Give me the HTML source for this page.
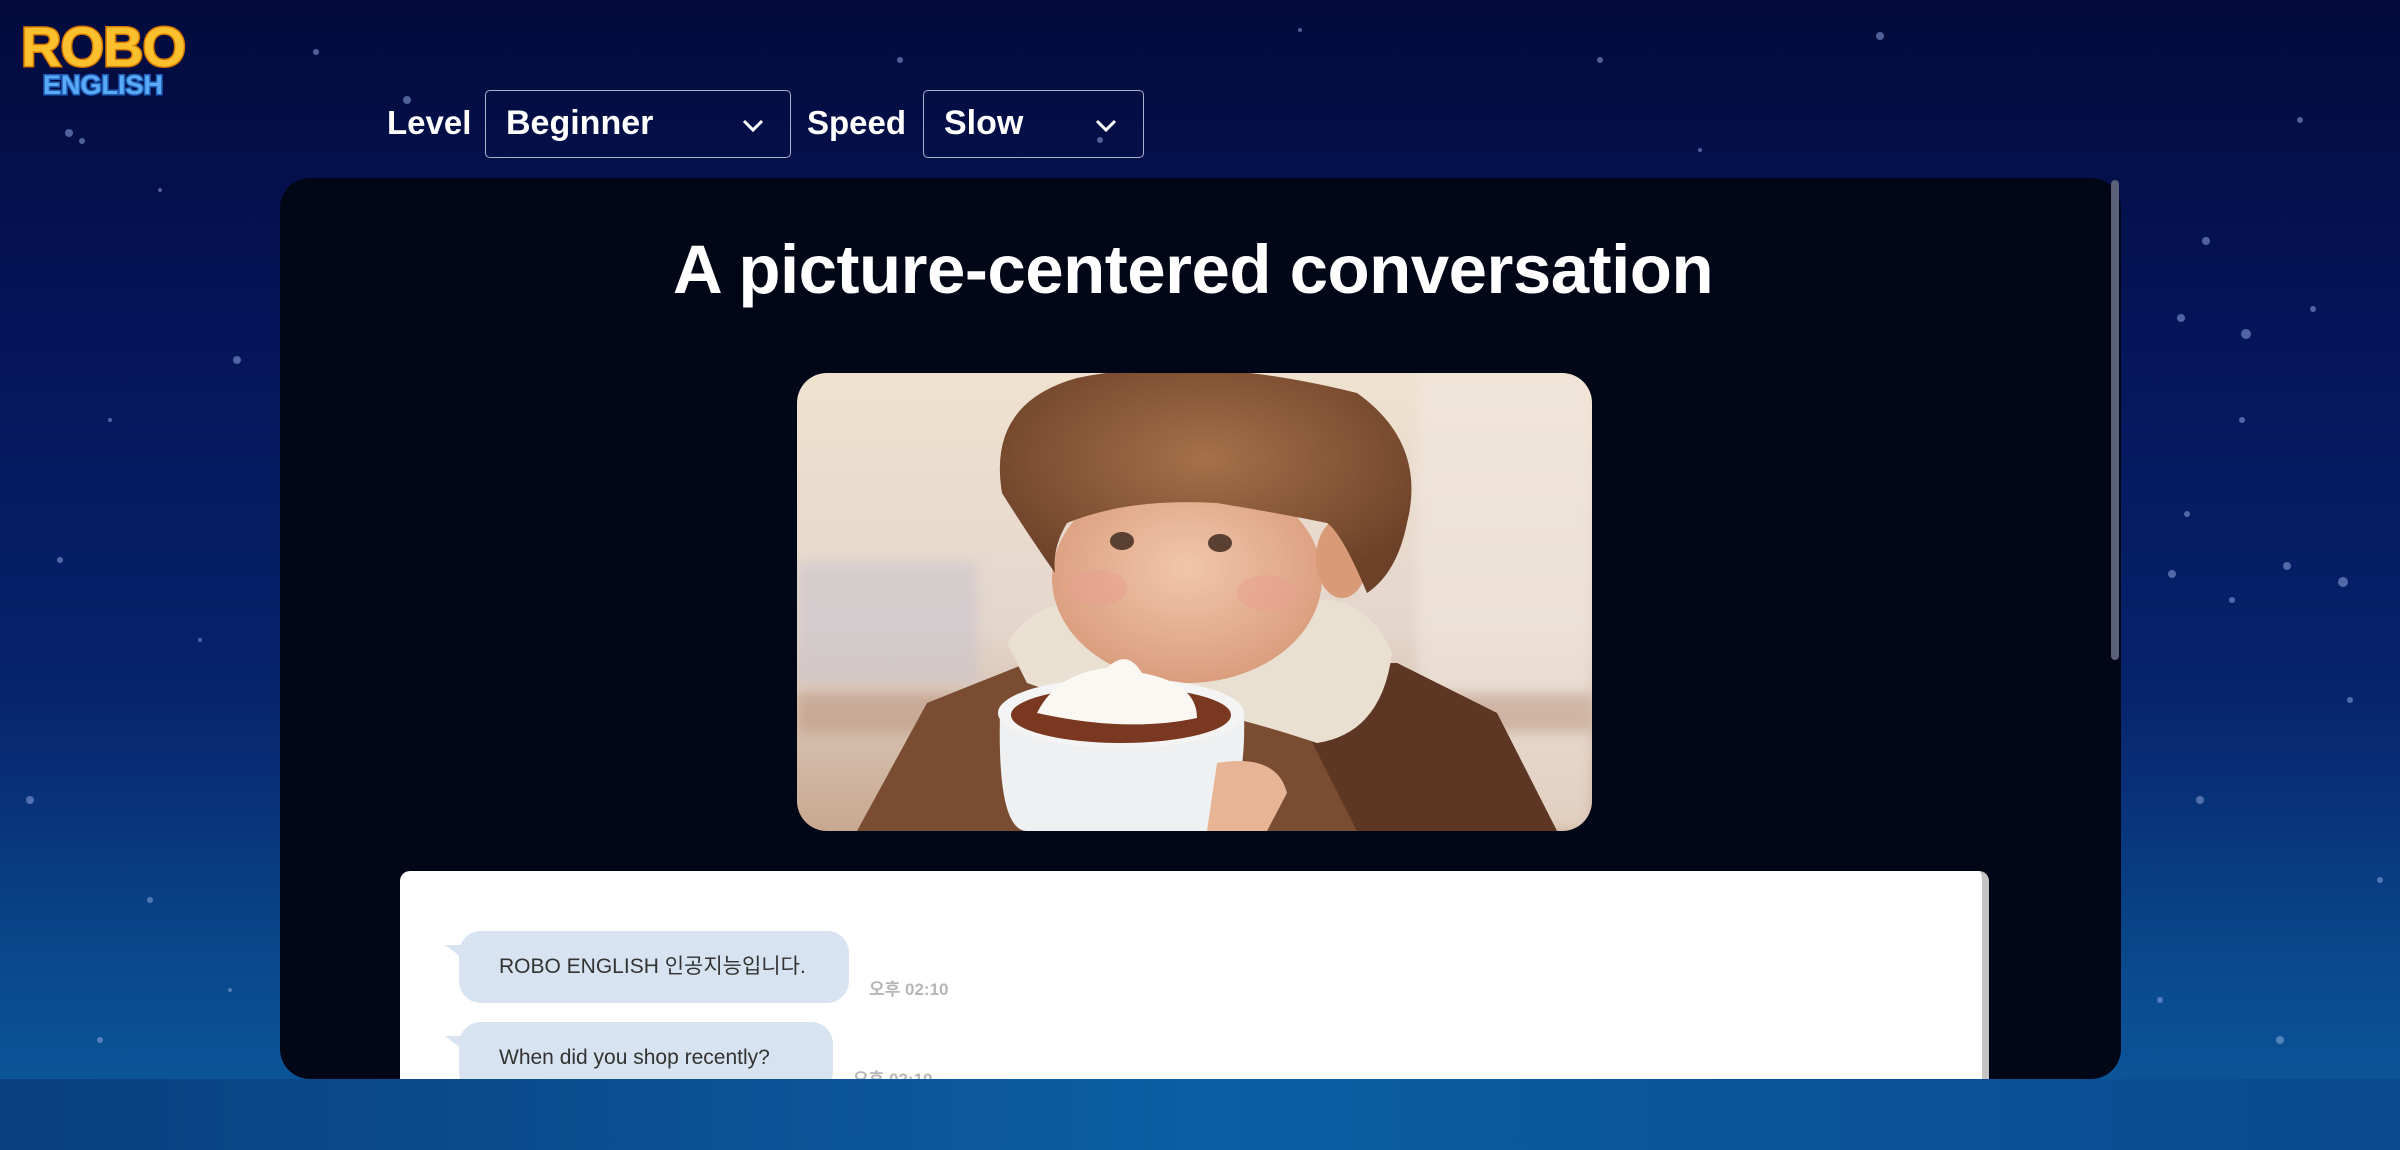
<!DOCTYPE html>
<html><head><meta charset="utf-8"><style>
*{margin:0;padding:0;box-sizing:border-box}
html,body{width:2400px;height:1150px;overflow:hidden}
body{position:relative;font-family:"Liberation Sans","Noto Sans CJK KR",sans-serif;
background:linear-gradient(180deg,#030b3c 0%,#05155a 30%,#07236d 60%,#0a4a8e 85%,#0b5c9e 100%);}
.stars{position:absolute;left:0;top:0}
.logo{position:absolute;left:18px;top:14px;width:170px;height:86px}
.lbl{position:absolute;color:#fff;font-weight:bold;font-size:33px;top:104px}
.sel{position:absolute;top:90px;height:68px;border:1.5px solid #aab3cc;border-radius:5px;color:#fff;font-weight:bold;font-size:34px;padding:13px 0 0 20px}
.sel svg{position:absolute;right:26px;top:28px}
.panel{position:absolute;left:280px;top:178px;width:1841px;height:901px;background:#020718;border-radius:30px;overflow:hidden}
.sb{position:absolute;left:2111px;top:180px;width:8px;height:480px;background:#5a6078;border-radius:4px}
h1{position:absolute;left:0;width:2386px;top:230px;text-align:center;color:#fff;font-size:69px;font-weight:bold;letter-spacing:-0.5px}
.pic{position:absolute;left:797px;top:373px;width:795px;height:458px;border-radius:30px;overflow:hidden}
.chat{position:absolute;left:400px;top:871px;width:1589px;height:220px;background:#fff;border-radius:10px 10px 0 0;border-right:7px solid #c4c4c4}
.bub{position:absolute;background:#d7e3f0;border-radius:22px;color:#333;font-size:21px;padding:0 40px;line-height:72px}
.bub:before{content:"";position:absolute;left:-14px;top:14px;border-top:12px solid #d7e3f0;border-left:16px solid transparent}
.tm{position:absolute;color:#b6b6b6;font-size:17px;font-weight:bold}
.bottom{position:absolute;left:0;top:1079px;width:2400px;height:71px;background:linear-gradient(90deg,#0a3f80,#0b5ea2 50%,#0a4a8e)}
</style></head><body>
<svg class="stars" width="2400" height="1150">
<g fill="#8fa6e0" opacity=".55">
<circle cx="316" cy="52" r="3"/><circle cx="407" cy="100" r="4"/><circle cx="160" cy="190" r="2"/><circle cx="69" cy="133" r="4"/><circle cx="82" cy="141" r="3"/><circle cx="237" cy="360" r="4"/><circle cx="110" cy="420" r="2"/><circle cx="60" cy="560" r="3"/><circle cx="200" cy="640" r="2"/><circle cx="30" cy="800" r="4"/><circle cx="150" cy="900" r="3"/><circle cx="230" cy="990" r="2"/><circle cx="100" cy="1040" r="3"/>
<circle cx="2206" cy="241" r="4"/><circle cx="2181" cy="318" r="4"/><circle cx="2246" cy="334" r="5"/><circle cx="2313" cy="309" r="3"/><circle cx="2187" cy="514" r="3"/><circle cx="2242" cy="420" r="3"/><circle cx="2172" cy="574" r="4"/><circle cx="2287" cy="566" r="4"/><circle cx="2343" cy="582" r="5"/><circle cx="2232" cy="600" r="3"/><circle cx="2300" cy="120" r="3"/><circle cx="2350" cy="700" r="3"/><circle cx="2200" cy="800" r="4"/><circle cx="2380" cy="880" r="3"/><circle cx="2160" cy="1000" r="3"/><circle cx="2280" cy="1040" r="4"/><circle cx="1880" cy="36" r="4"/><circle cx="1600" cy="60" r="3"/><circle cx="1300" cy="30" r="2"/><circle cx="900" cy="60" r="3"/><circle cx="1100" cy="140" r="3"/><circle cx="1700" cy="150" r="2"/>
<circle cx="560" cy="1110" r="3"/><circle cx="900" cy="1120" r="3"/><circle cx="1420" cy="1110" r="4"/><circle cx="1900" cy="1120" r="3"/><circle cx="1200" cy="1135" r="2"/>
</g></svg>
<svg class="logo" viewBox="0 0 170 86">
<text x="85" y="52" text-anchor="middle" font-family="Liberation Sans" font-weight="bold" font-size="56" fill="#fbc02d" stroke="#d97a00" stroke-width="3" paint-order="stroke" letter-spacing="-1">ROBO</text>
<text x="85" y="80" text-anchor="middle" font-family="Liberation Sans" font-weight="bold" font-size="27" fill="#5aaaf5" stroke="#1f5fb8" stroke-width="3" paint-order="stroke">ENGLISH</text>
</svg>
<div class="lbl" style="left:387px">Level</div>
<div class="sel" style="left:485px;width:306px">Beginner<svg width="22" height="14" viewBox="0 0 22 14"><path d="M2 2 L11 11 L20 2" stroke="#fff" stroke-width="3" fill="none"/></svg></div>
<div class="lbl" style="left:807px">Speed</div>
<div class="sel" style="left:923px;width:221px">Slow<svg width="22" height="14" viewBox="0 0 22 14"><path d="M2 2 L11 11 L20 2" stroke="#fff" stroke-width="3" fill="none"/></svg></div>
<div class="panel"></div>
<div class="sb"></div>
<h1>A picture-centered conversation</h1>
<div class="pic"><svg width="795" height="458" viewBox="0 0 795 458">
<defs>
<linearGradient id="bg" x1="0" y1="0" x2="0" y2="1"><stop offset="0" stop-color="#efe2cf"/><stop offset=".55" stop-color="#e4d6cc"/><stop offset=".75" stop-color="#d8c3b2"/><stop offset="1" stop-color="#c8a890"/></linearGradient>
<radialGradient id="face" cx=".5" cy=".45" r=".6"><stop offset="0" stop-color="#f2c6aa"/><stop offset="1" stop-color="#d89a7a"/></radialGradient>
<radialGradient id="hair" cx=".5" cy=".4" r=".6"><stop offset="0" stop-color="#a6714a"/><stop offset="1" stop-color="#6d4128"/></radialGradient>
<filter id="bl"><feGaussianBlur stdDeviation="6"/></filter>
</defs>
<rect width="795" height="458" fill="url(#bg)"/>
<g filter="url(#bl)">
<rect x="0" y="190" width="180" height="120" fill="#c9c4cf" opacity=".6"/>
<rect x="620" y="0" width="175" height="458" fill="#f1e8e0" opacity=".6"/>
<rect x="0" y="320" width="795" height="40" fill="#b8907a" opacity=".5"/>
</g>
<path d="M60 458 L130 330 L230 290 L600 290 L700 340 L760 458 Z" fill="#7a4d33"/>
<path d="M480 300 L600 290 L700 340 L760 458 L560 458 Z" fill="#5e3624"/>
<path d="M210 270 Q250 210 320 240 L470 240 Q560 200 595 280 Q585 360 520 370 Q430 340 380 335 Q300 335 230 310 Z" fill="#e9e0d2"/>
<ellipse cx="390" cy="205" rx="135" ry="105" fill="url(#face)"/>
<ellipse cx="545" cy="185" rx="26" ry="40" fill="#d99a78"/>
<path d="M205 120 Q190 30 280 5 Q400 -20 560 20 Q630 70 610 150 Q600 200 570 220 Q545 160 530 150 Q480 140 420 130 Q330 125 270 150 Q255 175 258 200 Q230 160 205 120Z" fill="url(#hair)"/>
<ellipse cx="325" cy="168" rx="12" ry="9" fill="#5a4030"/><ellipse cx="423" cy="170" rx="12" ry="9" fill="#5a4030"/>
<ellipse cx="300" cy="215" rx="30" ry="18" fill="#e8a090" opacity=".5"/><ellipse cx="470" cy="220" rx="30" ry="18" fill="#e8a090" opacity=".5"/>
<path d="M203 340 Q200 458 230 458 L410 458 Q450 440 447 340 Z" fill="#eef0f2"/>
<ellipse cx="324" cy="340" rx="123" ry="35" fill="#f4f4f4"/>
<ellipse cx="324" cy="342" rx="110" ry="28" fill="#7a3820"/>
<path d="M240 340 Q260 300 310 295 Q330 275 345 300 Q400 310 400 345 Q330 360 240 340Z" fill="#fbf7f2"/>
<path d="M420 390 Q480 380 490 420 L470 458 L410 458 Z" fill="#e8b496"/>
</svg></div>
<div class="chat">
<div class="bub" style="left:59px;top:60px;width:390px">ROBO ENGLISH 인공지능입니다.</div>
<div class="tm" style="left:469px;top:104px">오후 02:10</div>
<div class="bub" style="left:59px;top:151px;width:374px">When did you shop recently?</div>
<div class="tm" style="left:453px;top:194px">오후 02:10</div>
</div>
<div class="bottom"></div>
</body></html>
